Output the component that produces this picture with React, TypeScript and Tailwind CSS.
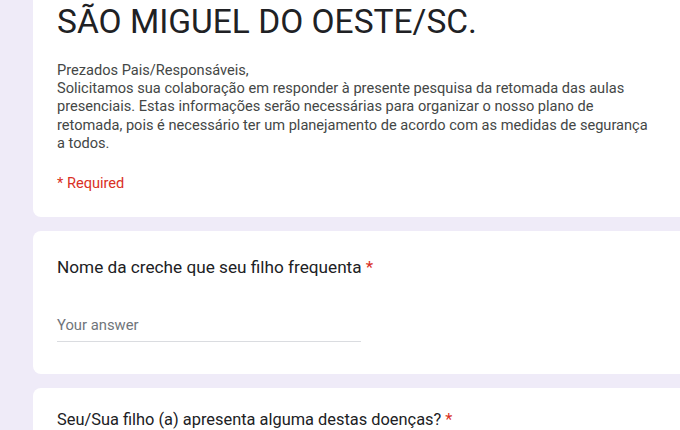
export default function App() {
  return (
    <div className="h-[430px] w-[680px] overflow-hidden bg-[#efebf8] pl-[33px] font-['Roboto',_'Liberation_Sans',_sans-serif]">
      <div className="-mt-3 flex w-[700px] flex-col gap-[14px]">
        {/* header card */}
        <div className="rounded-lg bg-white pb-[25px] pl-6 pr-10 pt-[12px]">
          <h1 className="text-[33.5px] leading-[44px] font-normal text-[#202124]">SÃO MIGUEL DO OESTE/SC.</h1>
          <div className="mt-[17px] text-[14.6px] leading-[18.2px] text-[#444746]">
            <p>Prezados Pais/Responsáveis,</p>
            <p>
              Solicitamos sua colaboração em responder à presente pesquisa da retomada das aulas
              <br />
              presenciais. Estas informações serão necessárias para organizar o nosso plano de
              <br />
              retomada, pois é necessário ter um planejamento de acordo com as medidas de segurança
              <br />a todos.
            </p>
          </div>
          <p className="mt-[22px] text-[14.6px] leading-[18px] text-[#d93025]">* Required</p>
        </div>

        {/* question 1 */}
        <div className="rounded-lg bg-white px-6 pb-[32px] pt-6">
          <p className="text-[17.2px] leading-6 text-[#202124]">
            Nome da creche que seu filho frequenta <span className="text-[#d93025]">*</span>
          </p>
          <div className="mt-[35px] w-[304px] border-b border-[#dadce0] pb-[5px] text-[14.8px] text-[#70757a]">
            Your answer
          </div>
        </div>

        {/* question 2 */}
        <div className="h-[80px] rounded-lg bg-white px-6 pt-5">
          <p className="text-[16.4px] leading-6 text-[#202124]">
            Seu/Sua filho (a) apresenta alguma destas doenças? <span className="text-[#d93025]">*</span>
          </p>
        </div>
      </div>
    </div>
  );
}
